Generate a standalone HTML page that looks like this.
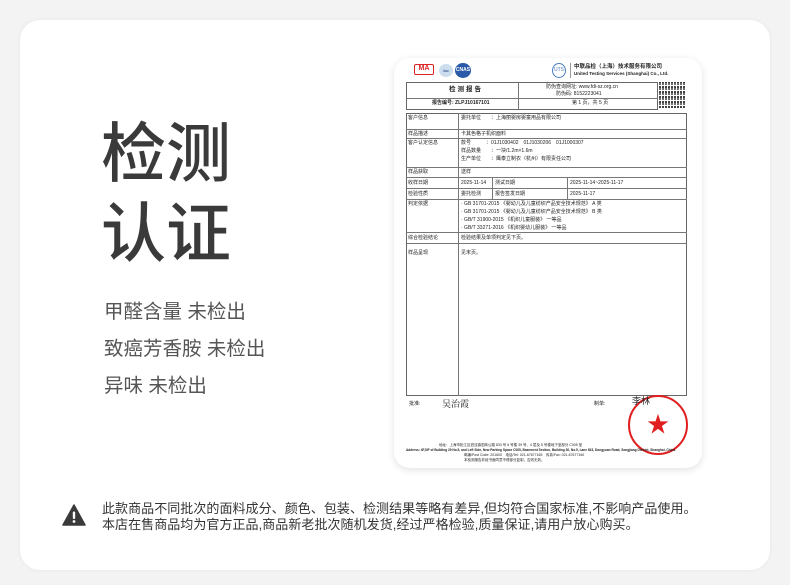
<!DOCTYPE html>
<html><head><meta charset="utf-8"><style>
*{margin:0;padding:0;box-sizing:border-box}
body{width:790px;height:585px;background:#f3f3f3;position:relative;overflow:hidden;font-family:"Liberation Sans","Noto Sans CJK SC",sans-serif}
.card{position:absolute;left:20px;top:20px;width:750px;height:550px;background:#fff;border-radius:20px;box-shadow:0 0 4px rgba(0,0,0,.06)}
.big{position:absolute;left:101px;font-size:65px;color:#3a3a3a;font-weight:500;line-height:1}
.ln{position:absolute;left:104px;font-size:19.5px;color:#555;line-height:1}
.foot{position:absolute;left:102px;font-size:13px;color:#333;line-height:16px;letter-spacing:0.05px}
.doc{position:absolute;left:394px;top:58px;width:308px;height:410px;background:#fff;border-radius:16px;box-shadow:0 2px 8px rgba(0,0,0,.12);overflow:hidden}
.t{position:absolute;font-size:5px;color:#222;line-height:1;white-space:nowrap}
.b{position:absolute;border:1px solid #666}
.h{position:absolute;height:1px;background:#777}
.v{position:absolute;width:1px;background:#777}
</style></head><body>
<div class="card"></div>
<div class="big" style="top:121px">检测</div>
<div class="big" style="top:201px">认证</div>
<div class="ln" style="top:303px">甲醛含量 未检出</div>
<div class="ln" style="top:340px">致癌芳香胺 未检出</div>
<div class="ln" style="top:377px">异味 未检出</div>
<svg style="position:absolute;left:62px;top:504px" width="24" height="22" viewBox="0 0 24 22"><path d="M12 1 L23 21 L1 21 Z" fill="#3a3a3a" stroke="#3a3a3a" stroke-width="1.5" stroke-linejoin="round"/><rect x="10.8" y="7.5" width="2.4" height="7.5" rx="1" fill="#fff"/><circle cx="12" cy="17.5" r="1.4" fill="#fff"/></svg>
<div class="foot" style="top:501px">此款商品不同批次的面料成分、颜色、包装、检测结果等略有差异,但均符合国家标准,不影响产品使用。</div>
<div class="foot" style="top:517px">本店在售商品均为官方正品,商品新老批次随机发货,经过严格检验,质量保证,请用户放心购买。</div>

<div class="doc">
 <div style="position:absolute;left:20px;top:6px;width:20px;height:11px;border:1.5px solid #d22;border-radius:2px;color:#d22;font-size:7px;font-weight:bold;line-height:8px;text-align:center">MA</div>
 <div style="position:absolute;left:45px;top:6px;width:14px;height:13px;border-radius:50%;background:#cde;color:#248;font-size:4px;line-height:13px;text-align:center">ilac</div>
 <div style="position:absolute;left:61px;top:5px;width:16px;height:15px;border-radius:50%;background:#2a5aa8;color:#fff;font-size:5px;line-height:15px;text-align:center;font-weight:bold">CNAS</div>
 <div style="position:absolute;left:158px;top:5px;width:14px;height:15px;border-radius:50%;border:1px solid #4a7ac0;color:#4a7ac0;font-size:5px;line-height:13px;text-align:center">UTS</div>
 <div style="position:absolute;left:176px;top:5px;width:1px;height:15px;background:#999"></div>
 <div class="t" style="left:180px;top:7px;font-weight:bold;font-size:5.5px">中联品检（上海）技术服务有限公司</div>
 <div class="t" style="left:180px;top:14px;font-weight:bold;font-size:4.5px">United Testing Services (Shanghai) Co., Ltd.</div>
 <div class="b" style="left:12px;top:24px;width:252px;height:28px"></div>
 <div class="v" style="left:124px;top:24px;height:28px"></div>
 <div class="h" style="left:12px;top:40px;width:252px"></div>
 <div class="t" style="left:55px;top:29px;font-size:6.5px;font-weight:bold;letter-spacing:2px">检测报告</div>
 <div class="t" style="left:38px;top:43px;font-weight:bold">报告编号: ZLPJ10167101</div>
 <div class="t" style="left:152px;top:27px">防伪查询网址: www.fdi-sz.org.cn</div>
 <div class="t" style="left:162px;top:34px">防伪码: 8152223041</div>
 <div class="t" style="left:178px;top:43px">第 1 页，共 5 页</div>
 <div style="position:absolute;left:265px;top:24px;width:27px;height:26px;background:repeating-linear-gradient(90deg,transparent 0 2px,#fff 2px 3px),repeating-linear-gradient(0deg,#222 0 2px,#fff 2px 3px,#555 3px 5px);opacity:.85"></div>
 <div class="b" style="left:12px;top:55px;width:281px;height:283px"></div>
 <div class="v" style="left:64px;top:55px;height:283px"></div>
 <div class="h" style="left:12px;top:71px;width:281px"></div>
 <div class="h" style="left:12px;top:80px;width:281px"></div>
 <div class="h" style="left:12px;top:109px;width:281px"></div>
 <div class="h" style="left:12px;top:119px;width:281px"></div>
 <div class="h" style="left:12px;top:130px;width:281px"></div>
 <div class="h" style="left:12px;top:141px;width:281px"></div>
 <div class="h" style="left:12px;top:174px;width:281px"></div>
 <div class="h" style="left:12px;top:185px;width:281px"></div>
 <div class="v" style="left:98px;top:119px;height:22px"></div>
 <div class="v" style="left:173px;top:119px;height:22px"></div>
 <div class="t" style="left:14px;top:58px">客户信息</div><div class="t" style="left:67px;top:58px">委托单位　　：上海丽婴房婴童用品有限公司</div>
 <div class="t" style="left:14px;top:74px">样品描述</div><div class="t" style="left:67px;top:74px">卡其色格子机织面料</div>
 <div class="t" style="left:14px;top:83px">客户认定信息</div>
 <div class="t" style="left:67px;top:83px">款号　　　：01J1030402　01J1030206　01J1000307</div>
 <div class="t" style="left:67px;top:91px">样品数量　　：一块/1.2m×1.6m</div>
 <div class="t" style="left:67px;top:99px">生产单位　　：鹰泰立制衣（杭州）有限责任公司</div>
 <div class="t" style="left:14px;top:112px">样品获取</div><div class="t" style="left:67px;top:112px">送样</div>
 <div class="t" style="left:14px;top:123px">收样日期</div><div class="t" style="left:67px;top:123px">2025-11-14</div><div class="t" style="left:101px;top:123px">测试日期</div><div class="t" style="left:176px;top:123px">2025-11-14~2025-11-17</div>
 <div class="t" style="left:14px;top:134px">检验性质</div><div class="t" style="left:67px;top:134px">委托检测</div><div class="t" style="left:101px;top:134px">报告签发日期</div><div class="t" style="left:176px;top:134px">2025-11-17</div>
 <div class="t" style="left:14px;top:144px">判定依据</div>
 <div class="t" style="left:67px;top:144px">· GB 31701-2015 《婴幼儿及儿童纺织产品安全技术规范》 A 类</div>
 <div class="t" style="left:67px;top:152px">· GB 31701-2015 《婴幼儿及儿童纺织产品安全技术规范》 B 类</div>
 <div class="t" style="left:67px;top:160px">· GB/T 31900-2015 《机织儿童服装》 一等品</div>
 <div class="t" style="left:67px;top:168px">· GB/T 33271-2016 《机织婴幼儿服装》 一等品</div>
 <div class="t" style="left:14px;top:178px">综合检验结论</div><div class="t" style="left:67px;top:178px">检验结果及单项判定见下页。</div>
 <div class="t" style="left:14px;top:193px">样品呈现</div><div class="t" style="left:67px;top:193px">见末页。</div>
 <div class="t" style="left:15px;top:344px">批准:</div>
 <div class="t" style="left:48px;top:341px;font-size:9px;font-family:'Noto Serif CJK SC',serif">吴治霞</div>
 <div class="t" style="left:200px;top:344px">制单:</div>
 <div style="position:absolute;left:234px;top:337px;width:60px;height:60px;border:2px solid #e02020;border-radius:50%;color:#e02020;font-size:22px;text-align:center;line-height:56px">★</div>
 <div class="t" style="left:238px;top:339px;font-size:9px">李林</div>
 <div class="t" style="left:45px;top:386px;font-size:3.5px">地址：上海市松江区泗泾镇泗砖公路 833 号 6 号楼 39 号、4 层及 5 号楼地下室部分 C005 室</div>
 <div class="t" style="left:12px;top:391px;font-size:3.2px;font-weight:bold">Address: 4F,5/F of Building 29 No.5, and Left Side, New Parking Space C005, Basement Section, Building 30, No.5, Lane 833, Dongyuan Road, Songjiang District, Shanghai, China</div>
 <div class="t" style="left:70px;top:396px;font-size:3.5px">邮编/Post Code: 201600　电话/Tel: 021-67677165　传真/Fax: 021-67677160</div>
 <div class="t" style="left:70px;top:401px;font-size:3.5px">本检测报告非经书面同意不得部分复制，否则无效。</div>
</div>
</body></html>
